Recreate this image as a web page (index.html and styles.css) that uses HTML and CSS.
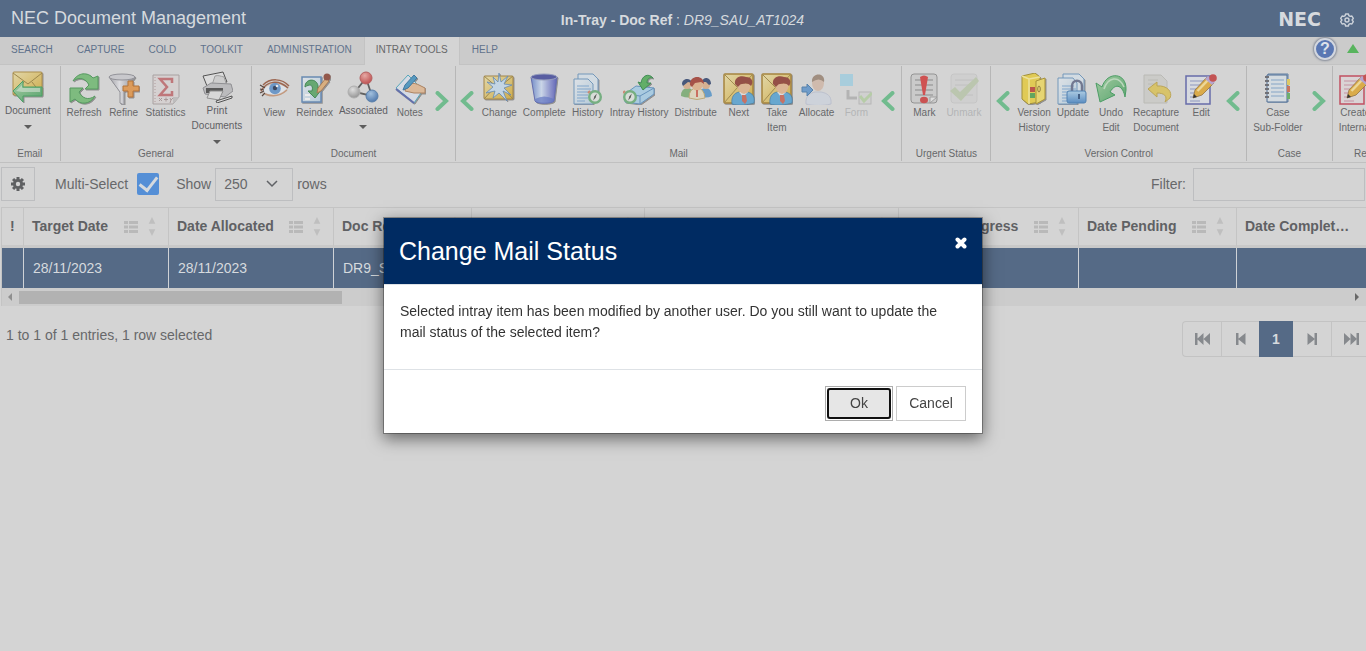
FILE: index.html
```html
<!DOCTYPE html>
<html lang="en">
<head>
<meta charset="utf-8">
<title>NEC Document Management</title>
<link rel="stylesheet" href="styles.css">
</head>
<body>
<svg class="sprite" width="0" height="0" aria-hidden="true">
  <defs>
    <linearGradient id="gold" x1="0" y1="0" x2="1" y2="1"><stop offset="0" stop-color="#e3d7a4"/><stop offset="1" stop-color="#cfa93e"/></linearGradient>
    <linearGradient id="green" x1="0" y1="0" x2="1" y2="1"><stop offset="0" stop-color="#9ccb9c"/><stop offset="1" stop-color="#4d9e63"/></linearGradient>
    <linearGradient id="steel" x1="0" y1="0" x2="1" y2="0"><stop offset="0" stop-color="#9a9a9f"/><stop offset=".4" stop-color="#dedee2"/><stop offset="1" stop-color="#85858c"/></linearGradient>
    <linearGradient id="bluebin" x1="0" y1="0" x2="1" y2="0"><stop offset="0" stop-color="#6a86c6"/><stop offset=".4" stop-color="#c9d6ea"/><stop offset="1" stop-color="#5659b4"/></linearGradient>
    <linearGradient id="paper" x1="0" y1="0" x2="1" y2="1"><stop offset="0" stop-color="#dfe4e8"/><stop offset="1" stop-color="#b4cadb"/></linearGradient>
    <linearGradient id="sky" x1="0" y1="0" x2="0" y2="1"><stop offset="0" stop-color="#a9cbe4"/><stop offset="1" stop-color="#4f86c0"/></linearGradient>
    <radialGradient id="redball" cx=".4" cy=".3" r=".7"><stop offset="0" stop-color="#e7a5a0"/><stop offset="1" stop-color="#bd4444"/></radialGradient>
    <radialGradient id="blueball" cx=".4" cy=".3" r=".7"><stop offset="0" stop-color="#9dbfe0"/><stop offset="1" stop-color="#4571a9"/></radialGradient>
    <radialGradient id="greyball" cx=".4" cy=".3" r=".7"><stop offset="0" stop-color="#e0e0e0"/><stop offset="1" stop-color="#8f8f8f"/></radialGradient>
    <filter id="shade" x="-20%" y="-20%" width="150%" height="150%"><feDropShadow dx="1" dy="1" stdDeviation=".7" flood-color="#555" flood-opacity=".6"/></filter>

    <g id="clock"><circle cx="0" cy="0" r="5.800" fill="#d9ded9" stroke="#6cab79" stroke-width="2.400"/><path d="M1.800-3.500 .700.600-1.800 3.500-.700-.600z" fill="#4a4f4a"/><path d="M-7-4l2-2" stroke="#c98268" stroke-width="2"/></g>
    <g id="pencil"><path d="M8 23 10 15 22 2 29 8 17 20z" fill="#dba73d" stroke="#8c6a35" stroke-width=".8"/><path d="M12.500 16 24 4" stroke="#efd893" stroke-width="2.500"/><path d="M20 4 27 10 30 7 23 1z" fill="#b3a1cf"/><circle cx="28" cy="3" r="3.800" fill="#c24747"/><path d="M8 23l1-4 3 3z" fill="#222"/></g>
    <g id="person"><path d="M9 31c-1-7 2-11 7-12l4 3 4-3c6 1 8 5 7 11-6 2-16 3-22 1z" fill="#5da3cf" stroke="#397199" stroke-width=".7"/><path d="M16 19 20 24 25 19z" fill="#dedede"/><path d="M19 22h4l1 6-2 3-3-3z" fill="#c4685a"/><path d="M14 10q0 9 7 11 6-1 7-10z" fill="#dcb28e"/><path d="M12 11C11 4 18 2 23 4c6 0 8 5 5 9-2-3-6-3-9-2-2 0-3 2-4 3z" fill="#8f4338"/></g>
    <g id="lines" stroke="#7ba2cc" stroke-width="1.200"><path d="M5 13h12M5 16h14M5 19h14M5 22h11M5 25h11M5 28h8"/></g>
  </defs>

  <symbol id="i-mail" viewBox="0 0 32 32"><g filter="url(#shade)"><rect x="1" y="1" width="29" height="23" rx="1" fill="url(#gold)" stroke="#a8873e"/><path d="M1 2 16 13 30 2M1 24 12 11M30 24 20 11" fill="none" stroke="#97803f"/><path d="M1 20 11 10v6h19v9H11v6z" fill="url(#green)" stroke="#3c9a5b"/><path d="M4 20 10 14v3h18v4H10z" fill="#d5e3d6" opacity=".6"/></g></symbol>
  <symbol id="i-refresh" viewBox="0 0 32 32"><g fill="#74b976" stroke="#489254" filter="url(#shade)"><path d="M5 8C10-1 20-1 25 5L30 3v13H17l4-4C18 6 12 3 5 8z"/><path d="M27 23C22 32 12 32 7 26L2 29V15h13l-4 4c3 6 9 9 16 4z"/></g></symbol>
  <symbol id="i-refine" viewBox="0 0 32 32"><g filter="url(#shade)"><path d="M1 4 12 19v11l4 2V19L27 4z" fill="url(#steel)" stroke="#8b8b92"/><ellipse cx="14" cy="4" rx="13" ry="3" fill="#c7c7cc" stroke="#8b8b92"/><path d="M20 8h5v5h6v5h-6v6h-5v-6h-5v-5h5z" fill="#dd954f" stroke="#b06a28"/></g></symbol>
  <symbol id="i-stats" viewBox="0 0 32 32"><path d="M3 2h26v22l-6 7H3z" fill="#d6d1d1" stroke="#a49c9c"/><path d="M5 4v26" stroke="#ad9696" stroke-dasharray="1 2"/><path d="M23 31v-7h6z" fill="#bbb"/><path d="M22 10V6H10l7 8-7 8h12v-4" fill="none" stroke="#bd6d71" stroke-width="2.500"/><path d="M9 25l3 3m0-3-3 3M14 26.500h4m-2-2v4M20 25l1 2 2-2m-2 2-1 3" stroke="#a49393" fill="none"/></symbol>
  <symbol id="i-print" viewBox="0 0 32 32"><path d="M2 5 22 1 26 11 6 15z" fill="#dcdcdc" stroke="#444"/><path d="M11 14 14 5c3-1 5 0 9 1l3 9z" fill="#cdcdcd" stroke="#999"/><path d="M2 17 10 12 30 13 32 20 24 26 4 23z" fill="#b9b9bb" stroke="#88888c"/><path d="M5 17h17v5H5z" fill="#4c4c4c"/><path d="M9 20h13l-4 9-12-2z" fill="#d9d9d9" stroke="#8a8a8a"/><path d="M15 30 31 25v2l-15 5z" fill="#ddd" stroke="#444"/></symbol>
  <symbol id="i-view" viewBox="0 0 32 32"><path d="M2 17C8 8 21 5 31 14c-3 8-18 13-28 6z" fill="#cfc3bb"/><path d="M4 18c5-8 17-9 25-3-5 7-17 9-25 3z" fill="#dfe4ea"/><circle cx="17" cy="15.500" r="5.800" fill="#6392c6"/><circle cx="17" cy="15" r="2.200" fill="#2d3a55"/><circle cx="19" cy="13" r="1.300" fill="#e5e8ee"/><path d="M3 18C9 8 20 6 30 15M5 12C12 5 24 5 31 13" fill="none" stroke="#965b43" stroke-width="1.500"/><path d="M2 12 7 15M2 16l4 1M2 20l4-2M4 23l3-3" stroke="#4c3a34" stroke-width="1.200"/><path d="M7 21q12 5 22-4" fill="none" stroke="#c19376" stroke-width="1.500"/></symbol>
  <symbol id="i-reindex" viewBox="0 0 32 32"><g filter="url(#shade)"><path d="M3 4h19v25H3z" fill="url(#paper)" stroke="#5d83ae" stroke-width="1.500"/><path d="M6 22h5M6 26h5" stroke="#eee" stroke-width="2"/><path d="M6 14C6 5 18 5 19 13v4h3l-6 8-7-7h4c2-7-3-7-7-4z" fill="#5ba468" stroke="#37804a"/><path d="M18 20 19 15 27 5 30 8 22 18z" fill="#d9ab78" stroke="#a0714a"/><circle cx="28" cy="4" r="3.500" fill="#8c4c3c"/></g></symbol>
  <symbol id="i-assoc" viewBox="0 0 32 32"><path d="M19 7 8 21 25 25z" fill="none" stroke="#555" stroke-width="1.800"/><circle cx="19" cy="7" r="6" fill="url(#redball)" stroke="#b05555"/><circle cx="7" cy="21" r="6" fill="url(#greyball)" stroke="#aaa"/><circle cx="25" cy="25" r="6" fill="url(#blueball)" stroke="#4d76a5"/></symbol>
  <symbol id="i-notes" viewBox="0 0 32 32"><g filter="url(#shade)"><path d="M2 15 14 2 29 17 20 30z" fill="#d7dce6" stroke="#4aa3b8"/><path d="M2 16 20 30" stroke="#5966a8" stroke-width="2"/><path d="M12 14C16 9 21 10 25 12l6 3v5H20l-9-2z" fill="#dcb793" stroke="#a87b57"/><path d="M9 17 11 12 20 2l3 3-9 10z" fill="#4a93bd" stroke="#306e99"/></g></symbol>
  <symbol id="i-change" viewBox="0 0 32 32"><g filter="url(#shade)"><rect x="1" y="3" width="29" height="23" rx="1" fill="url(#gold)" stroke="#9b7d3a"/><path d="M1 3 15 15 30 3M1 26 12 14M30 26 19 14" fill="none" stroke="#97803f"/><path d="M16 0 18 9 25 3 21 11 29 12 21 15 28 22 20 18 24 28 16 20 10 25 12 18 3 20 10 14 4 9 12 11 10 4 15 9z" fill="#c2d6e6" stroke="#5b83ad" stroke-width=".8"/></g></symbol>
  <symbol id="i-complete" viewBox="0 0 32 32"><g filter="url(#shade)"><path d="M3 4 7 28c1 3 17 3 19 0L29 4z" fill="url(#bluebin)" stroke="#5a63a8"/><ellipse cx="16" cy="4" rx="13" ry="3" fill="#4b519c" stroke="#8f97ba"/><path d="M7 26q9-5 19 0l-1 3q-9 3-17 0z" fill="#586dc0" opacity=".7"/></g></symbol>
  <symbol id="i-history" viewBox="0 0 32 32"><g filter="url(#shade)"><path d="M6 1h15l5 5v22H6z" fill="#d2dce4" stroke="#6b92b8"/><path d="M2 6h14l5 5v20H2z" fill="url(#paper)" stroke="#6b92b8"/></g><use href="#lines"/><use href="#clock" x="23" y="24"/></symbol>
  <symbol id="i-intray" viewBox="0 0 32 32"><g filter="url(#shade)"><path d="M2 21 13 13 31 15v6L17 31 2 29z" fill="#a6cbe2" stroke="#5c8dba"/><path d="M2 21 17 23 31 15M17 23v8" fill="none" stroke="#5c8dba"/><path d="M18 10c1-8 8-10 12-5-4-1-6 1-6 5h4l-8 7-5-8z" fill="#56aa5c" stroke="#338548"/></g><use href="#clock" x="7" y="24"/></symbol>
  <symbol id="i-distribute" viewBox="0 0 32 32"><path d="M1 23q0-8 7-8 5 0 6 8-5 3-13 0z" fill="#7cab75"/><path d="M19 23q0-8 7-8 5 0 6 8-6 3-13 0z" fill="#5c97c7"/><circle cx="7" cy="12" r="4" fill="#d6ad8b"/><circle cx="26" cy="12" r="4" fill="#d6ad8b"/><path d="M2 11C2 5 11 4 12 10l-4-1-5 4zM22 9c1-6 9-5 9 2l-2 1-3-3z" fill="#394b72"/><path d="M9 25q0-10 8-10 7 0 8 10-8 3-16 0z" fill="#ddd6bd" stroke="#b9a46f"/><circle cx="17" cy="12" r="5.500" fill="#dcb08b"/><path d="M10 12C9 2 24 1 24 11l-3-2-6 1-3 4z" fill="#a2443a"/><path d="M16 17h2v7h-2z" fill="#c96655"/></symbol>
  <symbol id="i-next" viewBox="0 0 32 32"><g filter="url(#shade)"><rect x="1" y="1" width="29" height="29" rx="1" fill="url(#gold)" stroke="#a17c2e" stroke-width="1.500"/><path d="M1 1 16 16 30 1M1 30 14 15" fill="none" stroke="#9c8443"/><use href="#person"/></g></symbol>
  <symbol id="i-allocate" viewBox="0 0 32 32"><path d="M5 31c-1-8 4-11 9-12h6c6 1 11 4 10 12-8 2-18 2-25 0z" fill="#cdd2db" stroke="#b9becc"/><ellipse cx="17" cy="10" rx="6" ry="8" fill="#cfb8a9"/><path d="M11 9C10-1 25-1 23 9q-5-5-12 0z" fill="#9b8778"/><path d="M1 14h5v-3l6 6-6 6v-4H1z" fill="#6597c9" stroke="#4a7aa8"/></symbol>
  <symbol id="i-form" viewBox="0 0 32 32"><rect x="0" y="1" width="13" height="12" fill="#a4cddd"/><path d="M8 17v8h9" fill="none" stroke="#b0b0b0" stroke-width="3"/><rect x="19" y="19" width="12" height="12" fill="#d0d0d0" stroke="#b4b4b4"/><path d="M20 23 24 28 32 20" fill="none" stroke="#b3cca3" stroke-width="3"/></symbol>
  <symbol id="i-mark" viewBox="0 0 32 32"><rect x="3" y="1" width="26" height="29" rx="3" fill="#cacaca" stroke="#8d8d8d"/><path d="M7 7h18M7 12h18M7 17h18M7 22h18" stroke="#838383"/><path d="M22 30v-6h7z" fill="#e0e0e0" stroke="#999"/><path d="M12 4q4-3 8 0l-3 18h-2z" fill="#cf4545"/><ellipse cx="16" cy="27" rx="4" ry="3.200" fill="#c94646"/></symbol>
  <symbol id="i-unmark" viewBox="0 0 32 32"><rect x="3" y="1" width="26" height="29" rx="3" fill="#cfcfcf" stroke="#c4c4c4"/><path d="M7 7h18M7 12h16M7 22h18" stroke="#bebebe"/><path d="M2 18 7 14 12 19 28 4 31 8 13 28z" fill="#b9c5ab"/></symbol>
  <symbol id="i-version" viewBox="0 0 32 32"><g filter="url(#shade)"><path d="M4 3 17 0 22 4V29L10 31 4 26z" fill="#e2ca48" stroke="#9b882e"/><path d="M4 3 11 6 22 4M11 6v25" fill="none" stroke="#efe397" stroke-width="1.500"/><path d="M12 14h5v5h-5z" fill="#b8483e"/><path d="M12 20h5v5h-5z" fill="#57a052"/><path d="M18 8 27 5V26L18 31z" fill="#e8d669" stroke="#a48b29"/><ellipse cx="21" cy="16" rx="1.300" ry="3" fill="none" stroke="#8c7a33"/></g></symbol>
  <symbol id="i-update" viewBox="0 0 32 32"><g filter="url(#shade)"><path d="M6 1h16l5 5v20H6z" fill="#d2dce4" stroke="#6b92b8"/><path d="M1 5h15l4 5v21H1z" fill="url(#paper)" stroke="#6b92b8"/></g><use href="#lines"/><path d="M15 19v-6c0-7 10-7 10 0v6" fill="none" stroke="#686f89" stroke-width="2.500"/><rect x="10" y="18" width="19" height="12" rx="2" fill="url(#sky)" stroke="#4479ad"/><path d="M22 21v5" stroke="#35557f" stroke-width="2"/></symbol>
  <symbol id="i-undo" viewBox="0 0 32 32"><path d="M1 10 7 14C12-2 32-1 31 17L30 24C28 13 21 9 15 19l5 3L5 29z" fill="url(#green)" stroke="#3d9759"/><path d="M9 16C13 4 24 2 29 14" fill="none" stroke="#b9d8bb" stroke-width="1.500"/></symbol>
  <symbol id="i-recapture" viewBox="0 0 32 32"><path d="M4 2h17l6 6v22H4z" fill="#cbcbc7" stroke="#b8b8b2"/><path d="M8 7h10M8 11h6" stroke="#b8b8b3"/><path d="M8 16 17 9v4c10-1 16 6 13 12l-5 4c3-6-1-9-8-9v4z" fill="#d8c25f" stroke="#b9a04a"/></symbol>
  <symbol id="i-edit" viewBox="0 0 32 32"><path d="M1 3h24v28H1z" fill="#d8dbe2" stroke="#5c62a5" stroke-width="1.500"/><path d="M5 8h14M5 12h11M5 16h8M5 20h5M5 24h4M5 28h10" stroke="#8692bd"/><use href="#pencil" y="2"/></symbol>
  <symbol id="i-case" viewBox="0 0 32 32"><path d="M6 1h20v28H6z" fill="#bed0df" stroke="#54759b"/><path d="M5 2h20v27H5z" fill="#d5dce2" stroke="#41628e"/><path d="M9 7h13M9 11h13M9 15h13M9 19h13M9 23h13" stroke="#7ca0c4"/><path d="M25 6h3v6h-3z" fill="#dfc758"/><path d="M25 13h3v6h-3z" fill="#c96a50"/><path d="M25 20h3v6h-3z" fill="#64ad63"/><path d="M3 4h4M3 8h4M3 12h4M3 16h4M3 20h4M3 24h4" stroke="#66666c" stroke-width="2"/></symbol>
  <symbol id="i-create" viewBox="0 0 32 32"><path d="M1 3h24v28H1z" fill="#dbd3d6" stroke="#c04355" stroke-width="1.500"/><path d="M5 8h14M5 12h11M5 16h8M5 20h5M5 24h4M5 28h10" stroke="#c48b9d"/><use href="#pencil" y="2"/></symbol>
  <symbol id="i-left" viewBox="0 0 14 20"><path d="M11.500 2 3 10 11.500 18" fill="none" stroke="#71bb8e" stroke-width="4" stroke-linecap="round"/></symbol>
  <symbol id="i-right" viewBox="0 0 14 20"><path d="M2.500 2 11 10 2.500 18" fill="none" stroke="#71bb8e" stroke-width="4" stroke-linecap="round"/></symbol>
  <symbol id="i-caret" viewBox="0 0 8 4"><path d="M0 0h8L4 4z" fill="#5d5d5d"/></symbol>
  <symbol id="i-list" viewBox="0 0 14 12"><path d="M0 0h4v3H0zM5 0h9v3H5zM0 4.500h4v3H0zM5 4.500h9v3H5zM0 9h4v3H0zM5 9h9v3H5z" fill="#b9b9b9"/></symbol>
  <symbol id="i-sort" viewBox="0 0 8 20"><path d="M4 0 7.500 7h-7zM4 20 .5 13h7z" fill="#bfbfbf"/></symbol>
</svg>

<header class="topbar">
  <h1 class="brand">NEC Document Management</h1>
  <p class="context"><b>In-Tray - Doc Ref</b> : <i>DR9_SAU_AT1024</i></p>
  <div class="topbar-end">
    <span class="logo">NEC</span>
    <button class="plain" aria-label="Settings"><svg width="14" height="14" viewBox="0 0 14 14" fill="none" stroke="#ccd2da" stroke-width="1.400" stroke-linejoin="round"><path d="M5.600 1h2.800l.5 1.700 1.300.7 1.700-.4 1.400 2.400L12.100 7l1.200 1.600-1.400 2.400-1.700-.4-1.300.7-.5 1.700H5.600l-.5-1.700-1.300-.7-1.700.4L.7 8.600 1.900 7 .7 5.400 2.100 3l1.700.4 1.300-.7z"/><circle cx="7" cy="7" r="2"/></svg></button>
  </div>
</header>

<nav class="tabs">
  <a class="tab" href="#">SEARCH</a>
  <a class="tab" href="#">CAPTURE</a>
  <a class="tab" href="#">COLD</a>
  <a class="tab" href="#">TOOLKIT</a>
  <a class="tab" href="#">ADMINISTRATION</a>
  <a class="tab active" href="#" aria-current="page">INTRAY TOOLS</a>
  <a class="tab" href="#">HELP</a>
  <div class="tabs-end">
    <button class="help" aria-label="Help">?</button>
    <button class="plain" aria-label="Collapse ribbon"><svg width="12" height="9" viewBox="0 0 12 9"><path d="M6 0 12 9H0z" fill="#58b45e"/></svg></button>
  </div>
</nav>

<section class="ribbon">
  <div class="group">
    <div class="tools">
      <button class="tool menu"><svg class="ico"><use href="#i-mail"/></svg>Document<svg class="caret"><use href="#i-caret"/></svg></button>
    </div>
    <h2 class="group-name">Email</h2>
  </div>
  <div class="group">
    <div class="tools">
      <button class="tool"><svg class="ico"><use href="#i-refresh"/></svg>Refresh</button>
      <button class="tool"><svg class="ico"><use href="#i-refine"/></svg>Refine</button>
      <button class="tool"><svg class="ico"><use href="#i-stats"/></svg>Statistics</button>
      <button class="tool menu"><svg class="ico"><use href="#i-print"/></svg>Print<br>Documents<svg class="caret"><use href="#i-caret"/></svg></button>
    </div>
    <h2 class="group-name">General</h2>
  </div>
  <div class="group">
    <div class="tools">
      <button class="tool"><svg class="ico"><use href="#i-view"/></svg>View</button>
      <button class="tool"><svg class="ico"><use href="#i-reindex"/></svg>Reindex</button>
      <button class="tool menu"><svg class="ico"><use href="#i-assoc"/></svg>Associated<svg class="caret"><use href="#i-caret"/></svg></button>
      <button class="tool"><svg class="ico"><use href="#i-notes"/></svg>Notes</button>
      <button class="step step-next" aria-label="More document tools"><svg class="chev"><use href="#i-right"/></svg></button>
    </div>
    <h2 class="group-name">Document</h2>
  </div>
  <div class="group">
    <div class="tools">
      <button class="step" aria-label="Fewer document tools"><svg class="chev"><use href="#i-left"/></svg></button>
      <button class="tool"><svg class="ico"><use href="#i-change"/></svg>Change</button>
      <button class="tool"><svg class="ico"><use href="#i-complete"/></svg>Complete</button>
      <button class="tool"><svg class="ico"><use href="#i-history"/></svg>History</button>
      <button class="tool"><svg class="ico"><use href="#i-intray"/></svg>Intray History</button>
      <button class="tool"><svg class="ico"><use href="#i-distribute"/></svg>Distribute</button>
      <button class="tool"><svg class="ico"><use href="#i-next"/></svg>Next</button>
      <button class="tool"><svg class="ico"><use href="#i-next"/></svg>Take<br>Item</button>
      <button class="tool"><svg class="ico"><use href="#i-allocate"/></svg>Allocate</button>
      <button class="tool" disabled><svg class="ico"><use href="#i-form"/></svg>Form</button>
      <button class="step step-next" aria-label="Fewer mail tools"><svg class="chev"><use href="#i-left"/></svg></button>
    </div>
    <h2 class="group-name">Mail</h2>
  </div>
  <div class="group">
    <div class="tools">
      <button class="tool"><svg class="ico"><use href="#i-mark"/></svg>Mark</button>
      <button class="tool" disabled><svg class="ico"><use href="#i-unmark"/></svg>Unmark</button>
    </div>
    <h2 class="group-name">Urgent Status</h2>
  </div>
  <div class="group">
    <div class="tools">
      <button class="step" aria-label="Fewer urgent tools"><svg class="chev"><use href="#i-left"/></svg></button>
      <button class="tool"><svg class="ico"><use href="#i-version"/></svg>Version<br>History</button>
      <button class="tool"><svg class="ico"><use href="#i-update"/></svg>Update</button>
      <button class="tool"><svg class="ico"><use href="#i-undo"/></svg>Undo<br>Edit</button>
      <button class="tool"><svg class="ico"><use href="#i-recapture"/></svg>Recapture<br>Document</button>
      <button class="tool"><svg class="ico"><use href="#i-edit"/></svg>Edit</button>
      <button class="step step-next" aria-label="Fewer version tools"><svg class="chev"><use href="#i-left"/></svg></button>
    </div>
    <h2 class="group-name">Version Control</h2>
  </div>
  <div class="group">
    <div class="tools">
      <button class="tool"><svg class="ico"><use href="#i-case"/></svg>Case<br>Sub-Folder</button>
      <button class="step step-next" aria-label="More case tools"><svg class="chev"><use href="#i-right"/></svg></button>
    </div>
    <h2 class="group-name">Case</h2>
  </div>
  <div class="group group-last">
    <div class="tools">
      <button class="tool"><svg class="ico"><use href="#i-create"/></svg>Create<br>Internal</button>
    </div>
    <h2 class="group-name">Records</h2>
  </div>
</section>

<main>
  <div class="controls">
    <button class="gear" aria-label="Table settings"><svg width="14" height="14" viewBox="0 0 14 14"><g fill="#5f6062"><circle cx="7" cy="7" r="5"/><path id="tooth" d="M5.500 0h3v14h-3z"/><use href="#tooth" transform="rotate(45 7 7)"/><use href="#tooth" transform="rotate(90 7 7)"/><use href="#tooth" transform="rotate(135 7 7)"/></g><circle cx="7" cy="7" r="2.200" fill="#d4d4d4"/></svg></button>
    <label class="multi">Multi-Select <input class="check" type="checkbox" checked></label>
    <label class="show">Show <select class="size"><option>250</option></select> rows</label>
    <label class="filter">Filter: <input class="filter-box" type="text"></label>
  </div>

  <div class="grid">
    <table class="table">
      <colgroup><col class="c-flag"><col class="c-target"><col class="c-alloc"><col class="c-ref"><col class="c-a"><col class="c-b"><col class="c-prog"><col class="c-pend"><col></colgroup>
      <thead>
        <tr>
          <th>!</th>
          <th><div class="head"><span class="name">Target Date</span><svg class="list"><use href="#i-list"/></svg><svg class="sort"><use href="#i-sort"/></svg></div></th>
          <th><div class="head"><span class="name">Date Allocated</span><svg class="list"><use href="#i-list"/></svg><svg class="sort"><use href="#i-sort"/></svg></div></th>
          <th><div class="head"><span class="name">Doc Ref</span><svg class="list"><use href="#i-list"/></svg><svg class="sort"><use href="#i-sort"/></svg></div></th>
          <th><div class="head"><span class="name"></span><svg class="sort"><use href="#i-sort"/></svg></div></th>
          <th><div class="head"><span class="name"></span><svg class="sort"><use href="#i-sort"/></svg></div></th>
          <th><div class="head"><span class="name">Date In Progress</span><svg class="list"><use href="#i-list"/></svg><svg class="sort"><use href="#i-sort"/></svg></div></th>
          <th><div class="head"><span class="name">Date Pending</span><svg class="list"><use href="#i-list"/></svg><svg class="sort"><use href="#i-sort"/></svg></div></th>
          <th><div class="head"><span class="name">Date Complet…</span></div></th>
        </tr>
      </thead>
      <tbody>
        <tr><td></td><td>28/11/2023</td><td>28/11/2023</td><td>DR9_SAU_AT1024</td><td></td><td></td><td></td><td></td><td></td></tr>
      </tbody>
    </table>
    <div class="scroll">
      <svg width="4" height="8" viewBox="0 0 4 8"><path d="M4 0v8L0 4z" fill="#8f8f8f"/></svg>
      <div class="track"><div class="thumb" style="width: 24.3%"></div></div>
      <svg width="4" height="8" viewBox="0 0 4 8"><path d="M0 0v8l4-4z" fill="#686868"/></svg>
    </div>
  </div>

  <div class="foot">
    <p class="info">1 to 1 of 1 entries, 1 row selected</p>
    <nav class="pages" aria-label="Pages">
      <button class="page" aria-label="First"><svg width="15" height="12" viewBox="0 0 15 12"><path d="M0 0h2.500v12H0zM8.500 0v12L2 6zM15 0v12L8.500 6z" fill="#86898d"/></svg></button>
      <button class="page" aria-label="Previous"><svg width="10" height="12" viewBox="0 0 10 12"><path d="M0 0h2.500v12H0zM9.500 0v12L2 6z" fill="#86898d"/></svg></button>
      <button class="page current">1</button>
      <button class="page" aria-label="Next"><svg width="10" height="12" viewBox="0 0 10 12"><path d="M7.500 0H10v12H7.500zM.5 0v12L8 6z" fill="#86898d"/></svg></button>
      <button class="page" aria-label="Last"><svg width="15" height="12" viewBox="0 0 15 12"><path d="M12.500 0H15v12h-2.500zM0 0v12l6.500-6zM6.500 0v12L13 6z" fill="#86898d"/></svg></button>
    </nav>
  </div>
</main>

<div class="overlay">
  <section class="dialog" role="dialog" aria-modal="true" aria-labelledby="dialog-title">
    <header class="dialog-head">
      <h2 class="dialog-title" id="dialog-title">Change Mail Status</h2>
      <button class="plain" aria-label="Close"><svg width="12" height="12" viewBox="0 0 12 12"><path d="M2.500 2.500 9.500 9.500M9.500 2.500 2.500 9.500" stroke="#fff" stroke-width="4" stroke-linecap="round"/></svg></button>
    </header>
    <p class="dialog-body">Selected intray item has been modified by another user. Do you still want to update the mail status of the selected item?</p>
    <footer class="dialog-foot">
      <button class="btn ok">Ok</button>
      <button class="btn">Cancel</button>
    </footer>
  </section>
</div>
</body>
</html>
```
FILE: styles.css
```css
* { box-sizing: border-box; }

body {
  margin: 0;
  min-height: 100vh;
  overflow-x: hidden;
  background: #d4d4d4;
  color: #67686a;
  font: 14px/21px "Liberation Sans", Arial, sans-serif;
}

h1, h2, p { margin: 0; font-weight: normal; }
button, input, select { margin: 0; font: inherit; color: inherit; }
.sprite { position: absolute; }
.plain { display: block; padding: 0; border: 0; background: none; }
.plain svg { display: block; }

/* Top bar */
.topbar {
  display: grid;
  grid-template-columns: 1fr auto 1fr;
  align-items: center;
  height: 37px;
  padding: 0 12px 0 11px;
  background: #556a86;
  color: #d6dade;
}
.brand { font-size: 18px; }
.context { padding-top: 3px; }
.topbar-end { display: flex; justify-content: flex-end; align-items: center; gap: 19px; padding-top: 2px; }
.logo { padding-bottom: 2px; font: bold 19px/20px "DejaVu Sans", sans-serif; }

/* Tabs */
.tabs { display: flex; height: 28px; background: #cbcbcb; border-bottom: 1px solid #c3c3c3; font-size: 10px; line-height: 26px; }
.tab { height: 28px; padding: 0 12px; color: #60728c; text-decoration: none; }
.tab:first-child { padding-left: 11px; }
.tab.active { padding: 0 11px; background: #d4d4d4; color: #67686a; border: 1px solid #c3c3c3; border-width: 0 1px; }
.tabs-end { display: flex; align-items: center; gap: 11px; margin-left: auto; padding-right: 7px; }
.help {
  width: 22px;
  height: 22px;
  margin-top: -4px;
  padding: 0;
  border: 2px solid #d3d7df;
  border-radius: 50%;
  background: #5a77b3;
  color: #dde2ea;
  font-weight: bold;
  font-size: 16px;
  line-height: 18px;
  box-shadow: 0 0 2px 1px #858b98;
}
.tabs-end .plain { margin-top: -4px; }

/* Ribbon */
.ribbon { display: flex; height: 98px; padding: 1px 0; overflow: hidden; border-bottom: 1px solid #c0c0c0; font-size: 10px; line-height: 15px; }
.group { flex: none; display: flex; flex-direction: column; border-right: 1px solid #b7b7b7; }
.tools { flex: 1; display: flex; align-items: flex-start; padding: 0 6px 0 3px; }
.group:first-child .tools { padding-left: 2px; }
.tools:has(.step:first-child) { padding-left: 0; }
.tools:has(.step:last-child) { padding-right: 0; }
.group-last { width: 80px; border-right: 0; }
.group-name { padding: 0 2px; font-size: 10px; line-height: 15px; text-align: center; }
.tool { padding: 7px 3px 0; border: 0; background: none; text-align: center; line-height: 15px; }
.tool.menu { padding-top: 5px; color: #5f6064; }
.tool:disabled { color: #b3b4b6; }
.ico { display: block; width: 32px; height: 32px; margin: 0 auto; opacity: .9; }
.caret { display: block; width: 8px; height: 4px; margin: 7px auto 0; }
.step { width: 23px; padding: 25px 0 0; border: 0; background: none; }
.step-next { width: 26px; }
.chev { display: block; width: 14px; height: 20px; margin: 0 auto; }

/* Table controls */
.controls { display: flex; align-items: center; padding: 4px 1px 6px; }
.gear { width: 34px; height: 34px; padding: 0; border: 1px solid #bdbec0; background: none; }
.gear svg { display: block; margin: 0 auto; }
.multi { display: flex; align-items: center; gap: 9px; margin-left: 20px; }
.check { appearance: none; width: 22px; height: 22px; border-radius: 2px; background: #558fd6; display: grid; place-items: center; }
.check::before { content: ""; width: 8px; height: 15px; margin-top: -4px; border: solid #d6dade; border-width: 0 3px 3px 0; transform: rotate(38deg); }
.show { display: flex; align-items: center; gap: 4px; margin-left: 17px; }
.size {
  appearance: none;
  width: 78px;
  height: 33px;
  padding: 0 8px;
  border: 1px solid #bdbec0;
  border-radius: 0;
  background: url("data:image/svg+xml,%3Csvg xmlns='http://www.w3.org/2000/svg' width='12' height='8'%3E%3Cpath d='M1 1l5 5 5-5' fill='none' stroke='%23606266' stroke-width='1.500'/%3E%3C/svg%3E") no-repeat right 14px center;
}
.filter { display: flex; align-items: center; gap: 7px; margin-left: auto; }
.filter-box { width: 172px; height: 33px; border: 1px solid #bdbec0; background: none; }

/* Grid */
.grid { margin-left: 1px; border-left: 1px solid #c4c4c4; border-top: 1px solid #c4c4c4; }
.table { width: 100%; table-layout: fixed; border-spacing: 0; }
.c-flag { width: 22px; }
.c-target { width: 145px; }
.c-alloc { width: 165px; }
.c-ref { width: 138px; }
.c-a { width: 173px; }
.c-b { width: 254px; }
.c-prog { width: 180px; }
.c-pend { width: 158px; }
.table th { height: 40px; padding: 0 0 0 8px; border-right: 1px solid #c4c4c4; border-bottom: 3px solid #c9c9c9; text-align: left; white-space: nowrap; color: #606164; }
.table th:last-child, .table td:last-child { border-right: 0; }
.table td { height: 40px; padding: 0 0 0 9px; border-right: 1px solid #cfd2d6; background: #556a86; color: #d6dade; white-space: nowrap; }
.head { display: flex; align-items: center; padding-right: 12px; }
.name { flex: 1; }
.list { width: 14px; height: 12px; margin-right: 10px; }
.sort { width: 8px; height: 19px; }
.scroll { display: flex; align-items: center; height: 18px; padding: 0 7px 0 6px; gap: 7px; background: #cccccc; }
.track { flex: 1; }
.thumb { height: 13px; background: #b2b2b2; }

/* Table footer */
.foot { display: flex; align-items: flex-start; justify-content: space-between; padding: 15px 0 0 6px; }
.info { padding-top: 4px; }
.pages { display: flex; margin-right: -4px; }
.page { width: 38px; height: 36px; padding: 0; border: 1px solid #c3c3c3; border-width: 1px 0 1px 1px; background: none; }
.page:first-child { width: 39px; border-radius: 4px 0 0 4px; }
.page:last-child { width: 39px; }
.page svg { display: block; margin: 0 auto; }
.page.current { width: 34px; border: 0; background: #556a86; color: #d6dade; font-weight: bold; }
.page.current + .page { border-left: 0; }

/* Dialog */
.overlay { position: fixed; inset: 0; display: flex; align-items: flex-start; justify-content: center; padding-top: 217px; }
.dialog { width: 600px; max-width: 100%; border: 1px solid rgba(0, 0, 0, .3); background: #fff; background-clip: padding-box; color: #333; box-shadow: 0 5px 15px rgba(0, 0, 0, .5); }
.dialog-head { display: flex; align-items: flex-start; justify-content: space-between; padding: 19px 15px; background: #002b62; color: #fff; border-bottom: 1px solid #dee2e6; }
.dialog-title { font-size: 25px; line-height: 28px; }
.dialog-body { padding: 16px 16px 26px; }
.dialog-foot { display: flex; justify-content: flex-end; gap: 3px; padding: 16px 16px 12px; border-top: 1px solid #dee2e6; }
.btn { width: 70px; height: 35px; padding: 0; border: 1px solid #ccc; background: #fff; color: #444; }
.btn.ok {
  position: relative;
  width: 68px;
  border-color: #adadad;
  background: #e6e6e6;
  box-shadow: inset 0 0 0 1px #fff;
}
.btn.ok::after { content: ""; position: absolute; inset: 1px; border: 2px solid #101010; border-radius: 3px; }
```
